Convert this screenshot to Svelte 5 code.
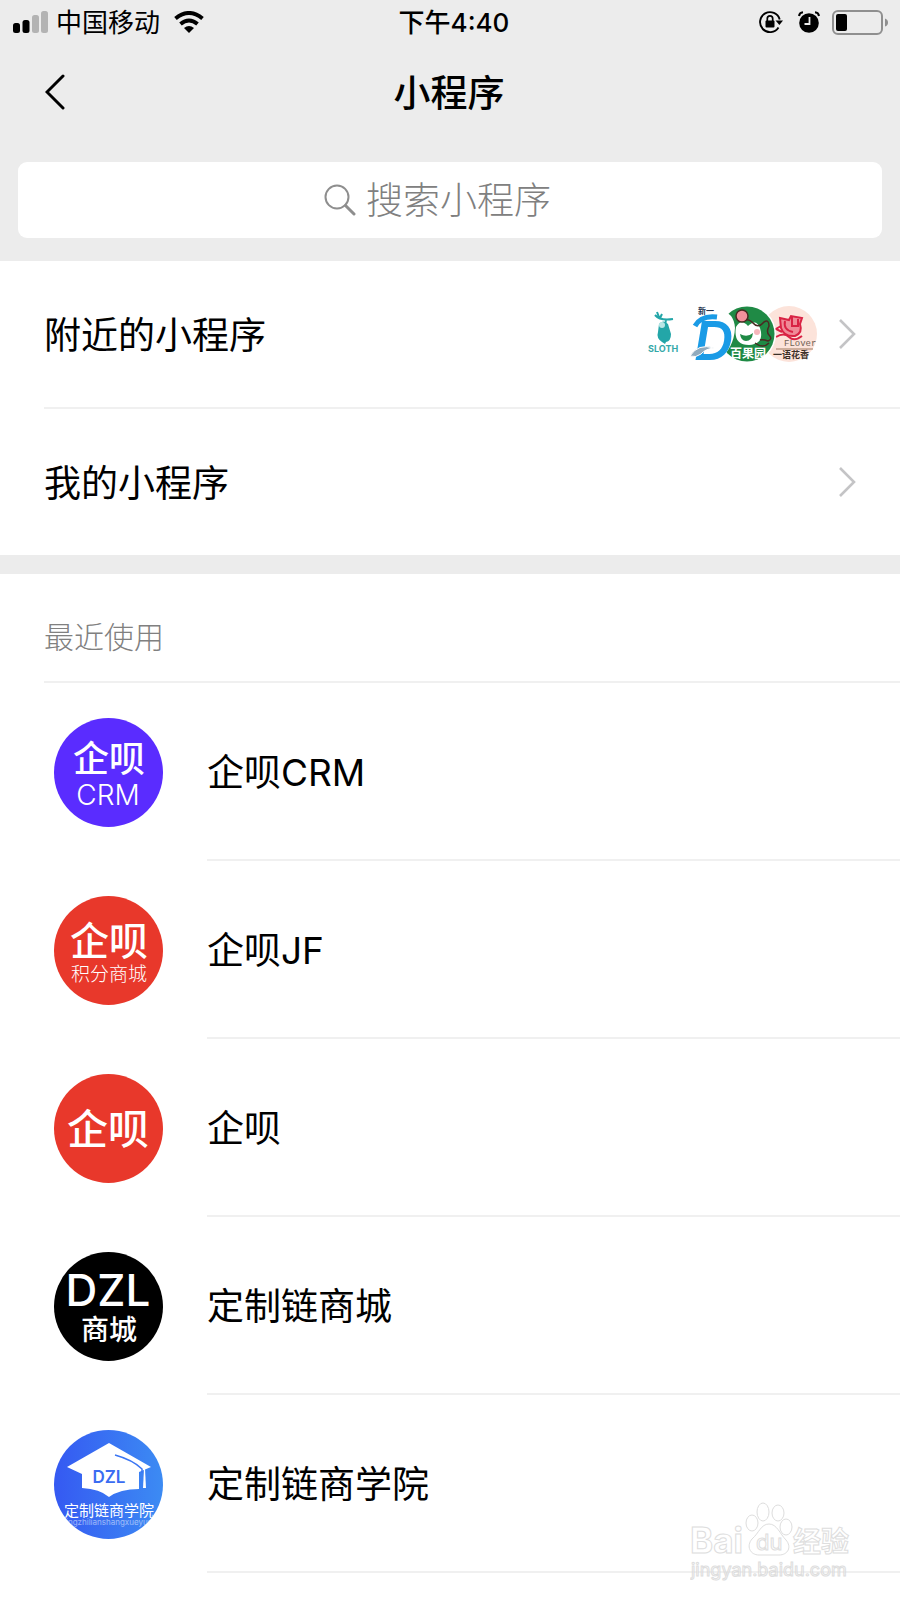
<script lang="ts">
  type App = { id: string; name: string };

  const recent: App[] = [
    { id: 'crm', name: '企呗CRM' },
    { id: 'jf', name: '企呗JF' },
    { id: 'qibei', name: '企呗' },
    { id: 'mall', name: '定制链商城' },
    { id: 'school', name: '定制链商学院' }
  ];

  let query = $state('');
</script>

{#snippet chevron()}
  <svg class="chevron" width="18" height="32" viewBox="0 0 18 32" aria-hidden="true">
    <path d="M2 2l14 14L2 30" fill="none" stroke="#c4c4c6" stroke-width="2.6" />
  </svg>
{/snippet}

<div class="page">
  <header>
    <div class="status">
      <div class="side">
        <svg width="35" height="22" viewBox="0 0 35 22" aria-hidden="true">
          <rect x="0" y="12" width="7" height="10" rx="2.5" />
          <rect x="9.5" y="9" width="7" height="13" rx="2.5" />
          <rect x="19" y="4" width="7" height="18" rx="2.5" fill="#b3b3b3" />
          <rect x="28" y="0" width="7" height="22" rx="2.5" fill="#b3b3b3" />
        </svg>
        <span class="carrier">中国移动</span>
        <svg class="wifi" width="30" height="22" viewBox="0 0 30 22" aria-hidden="true">
          <g fill="none" stroke="#000" stroke-width="4">
            <path d="M1.5 7.5Q15-3.5 28.5 7.5" />
            <path d="M6.5 13Q15 6 23.5 13" />
          </g>
          <path d="M10 17Q15 13 20 17L15 22Z" />
        </svg>
      </div>
      <span class="time">下午4:40</span>
      <div class="side right">
        <svg width="24" height="24" viewBox="0 0 24 24" aria-hidden="true">
          <path d="M19.5 17.5A10 10 0 1 1 20.700 9.5" fill="none" stroke="#000" stroke-width="1.9" />
          <path d="M16.5 10.5h7.5l-3.6 4.5z" />
          <rect x="6.5" y="10.5" width="9" height="7" rx="1" />
          <path d="M8.3 11V8.5a2.7 2.7 0 0 1 5.4 0V11" fill="none" stroke="#000" stroke-width="1.7" />
        </svg>
        <svg class="alarm" width="22" height="22" viewBox="0 0 22 22" aria-hidden="true">
          <circle cx="11" cy="12" r="9.8" />
          <path d="M1 5Q1.5 1.5 5 1.2M21 5Q20.5 1.5 17 1.2" fill="none" stroke="#000" stroke-width="2" />
          <path d="M11.5 6v7H6.5" fill="none" stroke="#ececec" stroke-width="1.8" />
        </svg>
        <svg width="57" height="25" viewBox="0 0 57 25" aria-hidden="true">
          <rect x="1" y="1" width="49" height="23" rx="5" fill="none" stroke="#8f8f8f" stroke-width="2" />
          <rect x="4" y="4" width="11" height="17" rx="2" />
          <path d="M53 8.500q3 1 3 4t-3 4z" fill="#8f8f8f" />
        </svg>
      </div>
    </div>

    <div class="nav">
      <button type="button" class="back" aria-label="返回">
        <svg width="20" height="36" viewBox="0 0 20 36" aria-hidden="true">
          <path d="M18 2L2 18l16 16" fill="none" stroke="#000" stroke-width="3" stroke-linecap="round" />
        </svg>
      </button>
      <h1>小程序</h1>
    </div>

    <label class="search">
      <svg width="32" height="32" viewBox="0 0 32 32" aria-hidden="true">
        <circle cx="13" cy="13" r="11.5" fill="none" stroke="#8e8e8e" stroke-width="2" />
        <path d="M21.5 21.5L30 30" stroke="#8e8e8e" stroke-width="3" stroke-linecap="round" />
      </svg>
      <input type="text" placeholder="搜索小程序" aria-label="搜索小程序" bind:value={query} />
    </label>
  </header>

  <nav class="entries">
    <a class="entry" href="#nearby">
      <span class="label">附近的小程序</span>
      <svg class="nearby" width="182" height="56" viewBox="0 0 182 56" aria-hidden="true">
        <!-- flower shop -->
        <circle cx="154" cy="28" r="28" fill="#fce3da" />
        <g fill="none" stroke="#d92344" stroke-width="2">
          <path d="M145 12l9 2 2-4 11 2-2 6q3 9-5 12-11 1-14-8z" fill="#f08a97" />
          <path d="M150 15q-2 9 8 11M157 11v9h6v-7M146 20l-5 3 6 3M141 31q8-5 13 0t13-1" />
        </g>
        <text x="149" y="40" class="mono" font-size="9" fill="#6f6254">FLover</text>
        <path d="M141 43h37" stroke="#a17b60" />
        <text x="138" y="52" font-size="9" font-weight="700" fill="#3b3028">一语花香</text>
        <!-- fruit shop -->
        <circle cx="112" cy="28" r="29" fill="#fff" />
        <circle cx="112" cy="28" r="27.5" fill="#1f8a45" />
        <path d="M101 21q5-9 12-1 8-8 12 2 5 16-11 17-16 0-13-18z" fill="#fff" />
        <path d="M105 28q7 4 13-1-1 8-7 8-5 0-6-7z" fill="#1f8a45" />
        <circle cx="122" cy="26" r="3" fill="#f5b6bb" />
        <g fill="none" stroke="#4a2a22" stroke-width="1.5">
          <path d="M103 15q10-4 15 2t11-1q5-3 5 4-3 6 0 9 4 4-1 6-5-2-8-1M120 37q8 6 14 0" />
          <circle cx="107" cy="10" r="6" fill="#f3919c" />
        </g>
        <text x="95" y="52" font-size="12" font-weight="700" fill="#fff">百果园</text>
        <!-- blue D -->
        <path d="M62 13q8-10 22-9 15 2 16 18-1 20-17 33H66z" fill="#fff" />
        <text x="63" y="8" font-size="8" font-weight="700" fill="#22334f">新一</text>
        <path d="M60 20q6-11 22-9" fill="none" stroke="#1a9be6" stroke-width="5" />
        <text x="59" y="54" class="latin" font-size="54" font-weight="600" font-style="italic" fill="#1a9be6">D</text>
        <path d="M55 50q8-13 24-8-9 1-13 6-5 4-11 2z" fill="#8faabd" stroke="#fff" />
        <!-- sloth -->
        <path d="M20 9q5 6 18 4M25 12l2-4M31 13l-1 8M22 6l2 5" fill="none" stroke="#23a6a8" stroke-width="2" />
        <path d="M24 18q4-5 9 0l3 10q0 7-5 8l-1 2-3-2q-6-4-4-10z" fill="#23a6a8" />
        <circle cx="27" cy="19" r="3" fill="#b9e6e5" />
        <text x="13" y="46" class="latin" font-size="9" font-weight="700" fill="#35a9a9">SLOTH</text>
      </svg>
      {@render chevron()}
    </a>
    <a class="entry" href="#mine">
      <span class="label">我的小程序</span>
      {@render chevron()}
    </a>
  </nav>

  <section class="recent">
    <h2>最近使用</h2>
    <ul>
      {#each recent as app (app.id)}
        <li>
          <a class="app" href="#{app.id}">
            <svg class="avatar" width="109" height="109" viewBox="0 0 109 109" aria-hidden="true">
              {#if app.id === 'crm'}
                <circle cx="54.5" cy="54.5" r="54.5" fill="#5a2cff" />
                <text x="19" y="54" font-size="36" font-weight="500">企呗</text>
                <text x="54" y="87" class="latin" font-size="28" font-weight="300" text-anchor="middle">CRM</text>
              {:else if app.id === 'jf'}
                <circle cx="54.5" cy="54.5" r="54.5" fill="#e8382b" />
                <text x="16" y="59" font-size="39" font-weight="500">企呗</text>
                <text x="17" y="85" font-size="19" font-weight="300">积分商城</text>
              {:else if app.id === 'qibei'}
                <circle cx="54.5" cy="54.5" r="54.5" fill="#e8382b" />
                <text x="13" y="70" font-size="41" font-weight="500">企呗</text>
              {:else if app.id === 'mall'}
                <circle cx="54.5" cy="54.5" r="54.5" fill="#000" />
                <text x="54" y="54" class="latin" font-size="44" font-weight="500" text-anchor="middle">DZL</text>
                <text x="55" y="88" font-size="28" font-weight="500" text-anchor="middle">商城</text>
              {:else}
                <defs>
                  <linearGradient id="school-bg">
                    <stop offset="0" stop-color="#3559f2" />
                    <stop offset="1" stop-color="#3c8bf3" />
                  </linearGradient>
                  <clipPath id="school-clip"><circle cx="54.5" cy="54.5" r="54.5" /></clipPath>
                </defs>
                <g clip-path="url(#school-clip)">
                  <rect width="109" height="109" fill="url(#school-bg)" />
                  <path d="M13 37L55 13l42 24-12 5v17q-19 0-30 8-9-8-27-9V44z" />
                  <path d="M61 25q18 5 27 14v4" fill="none" stroke="#3c76f3" stroke-width="1.5" />
                  <path d="M90 39h1l1 19h-3z" />
                  <text x="55" y="53" class="latin" font-size="17" font-weight="600" text-anchor="middle" fill="#3a6cf2">DZL</text>
                  <text x="55" y="86" font-size="15" text-anchor="middle">定制链商学院</text>
                  <text x="55" y="95" class="latin" font-size="8" text-anchor="middle" opacity="0.5">dingzhilianshangxueyuan</text>
                </g>
              {/if}
            </svg>
            <span class="name">{app.name}</span>
          </a>
        </li>
      {/each}
    </ul>
  </section>

  <svg class="watermark" width="170" height="84" viewBox="0 0 170 84" aria-hidden="true">
    <g fill="#fff" stroke="#d6d6d6" stroke-width="1">
      <text x="0" y="51" class="latin" font-size="35" font-weight="700">Bai</text>
      <ellipse cx="62" cy="21" rx="6" ry="8" />
      <ellipse cx="73" cy="10" rx="6" ry="9" />
      <ellipse cx="88" cy="11" rx="6" ry="8" />
      <ellipse cx="96" cy="25" rx="6" ry="8" />
      <path d="M79 22c-8 0-10 9-17 15-6 7-2 16 7 16h20c9 0 13-8 7-15-6-6-9-16-17-16z" />
      <text x="66" y="48" class="latin" font-size="22">du</text>
      <text x="103" y="50" font-size="28" font-weight="700">经验</text>
      <text x="1" y="74" class="latin" font-size="18">jingyan.baidu.com</text>
    </g>
  </svg>
</div>

<style>
  :global(body) {
    background: #fff;
  }

  .page {
    position: relative;
    min-height: 100vh;
    background: #fff;
    color: #000;
    font-family: Inter, 'Noto Sans CJK SC', sans-serif;
    font-size: 37px;
    line-height: 48px;
  }

  header {
    padding-bottom: 23px;
    background: #ececec;
  }

  .status {
    display: grid;
    grid-template-columns: 1fr auto 1fr;
    align-items: center;
    height: 44px;
    padding: 0 11px 0 13px;
    font-size: 26px;
    line-height: 40px;
  }
  .side {
    display: flex;
    align-items: center;
  }
  .right {
    justify-content: flex-end;
  }
  .carrier {
    margin: 0 14px 0 8px;
    padding-top: 2px;
  }
  .time {
    padding: 2px 0 0 6px;
    font-weight: 500;
  }
  .alarm {
    margin: 0 12px 0 15px;
  }

  .nav {
    display: grid;
    grid-template-columns: 1fr auto 1fr;
    align-items: center;
    height: 96px;
    padding: 0 45px;
  }
  .back {
    justify-self: start;
    display: flex;
    padding: 0;
    border: 0;
    background: none;
    cursor: pointer;
  }
  h1 {
    margin: 0;
    padding: 4px 2px 0 0;
    font-size: 37px;
    font-weight: 500;
  }

  .search {
    display: flex;
    align-items: center;
    justify-content: center;
    gap: 10px;
    height: 76px;
    margin: 22px 18px 0;
    border-radius: 9px;
    background: #fff;
  }
  .search input {
    width: 210px;
    height: 56px;
    padding: 0;
    border: 0;
    outline: 0;
    background: none;
    font: inherit;
    font-weight: 300;
  }
  .search input::placeholder {
    color: #808080;
    opacity: 1;
  }

  .entries {
    border-bottom: 19px solid #ececec;
  }
  .entry {
    display: flex;
    align-items: center;
    height: 146px;
    margin-left: 44px;
    padding-right: 44px;
    color: inherit;
    text-decoration: none;
  }
  .entry + .entry {
    border-top: 2px solid #f0f0f0;
  }
  .label {
    flex: 1;
    padding-top: 4px;
  }
  .nearby {
    margin-right: 21px;
  }

  h2 {
    margin: 0 0 0 44px;
    padding: 39px 0 20px;
    border-bottom: 2px solid #f0f0f0;
    color: #808080;
    font-size: 30px;
    font-weight: 300;
    line-height: 48px;
  }

  ul {
    margin: 0;
    padding: 0;
    list-style: none;
  }
  .app {
    display: flex;
    align-items: center;
    gap: 44px;
    padding-left: 54px;
    color: inherit;
    text-decoration: none;
  }
  .name {
    flex: 1;
    padding-top: 4px;
    border-bottom: 2px solid #f0f0f0;
    line-height: 172px;
  }

  svg {
    flex: none;
  }
  svg text {
    font-family: 'Noto Sans CJK SC', sans-serif;
  }
  svg text.latin {
    font-family: Inter, sans-serif;
  }
  svg text.mono {
    font-family: 'Liberation Mono', monospace;
  }
  .avatar {
    fill: #fff;
  }

  .watermark {
    position: absolute;
    right: 40px;
    bottom: 14px;
    opacity: 0.8;
    pointer-events: none;
  }
</style>
